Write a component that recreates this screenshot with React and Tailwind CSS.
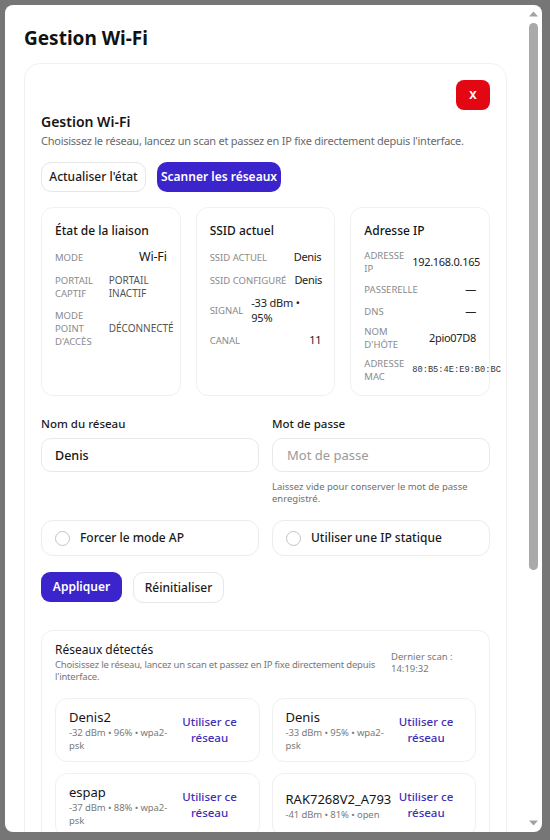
import React from "react";

const STATUS = [
  {
    title: "État de la liaison",
    gap: "gap-[9px]",
    rows: [
      { label: ["MODE"], value: "Wi-Fi", kind: "big" },
      { label: ["PORTAIL", "CAPTIF"], value: ["PORTAIL", "INACTIF"], kind: "state" },
      { label: ["MODE", "POINT", "D'ACCÈS"], value: ["DÉCONNECTÉ"], kind: "state" },
    ],
  },
  {
    title: "SSID actuel",
    gap: "gap-[7px]",
    rows: [
      { label: ["SSID ACTUEL"], value: "Denis" },
      { label: ["SSID CONFIGURÉ"], value: "Denis" },
      { label: ["SIGNAL"], value: ["-33 dBm •", "95%"], kind: "wrap" },
      { label: ["CANAL"], value: "11" },
    ],
  },
  {
    title: "Adresse IP",
    gap: "gap-[6px]",
    rows: [
      { label: ["ADRESSE", "IP"], value: "192.168.0.165" },
      { label: ["PASSERELLE"], value: "—" },
      { label: ["DNS"], value: "—" },
      { label: ["NOM", "D'HÔTE"], value: "2pio07D8" },
      { label: ["ADRESSE", "MAC"], value: "80:B5:4E:E9:B0:BC", kind: "mono" },
    ],
  },
];

const NETWORKS = [
  { ssid: "Denis2", meta: ["-32 dBm • 96% • wpa2-", "psk"] },
  { ssid: "Denis", meta: ["-33 dBm • 95% • wpa2-", "psk"] },
  { ssid: "espap", meta: ["-37 dBm • 88% • wpa2-", "psk"] },
  { ssid: "RAK7268V2_A793", meta: ["-41 dBm • 81% • open"] },
];

function Lines({ lines }) {
  return lines.map((l, i) => (
    <React.Fragment key={i}>
      {i > 0 && <br />}
      {l}
    </React.Fragment>
  ));
}

function StatusValue({ row }) {
  if (row.kind === "big")
    return <div className="whitespace-nowrap text-[12.5px] leading-4 tracking-[-0.2px] text-[#151515]">{row.value}</div>;
  if (row.kind === "state")
    return (
      <div className="w-[58px] shrink-0 text-left text-[10px] leading-[13px] text-[#555]">
        <Lines lines={row.value} />
      </div>
    );
  if (row.kind === "wrap")
    return (
      <div className="w-[73px] shrink-0 text-left text-[11px] leading-[15px] tracking-[-0.2px] text-[#222]">
        <Lines lines={row.value} />
      </div>
    );
  if (row.kind === "mono")
    return (
      <div className="-mr-[22px] whitespace-nowrap font-['Liberation_Mono',monospace] text-[8.7px] leading-4 text-[#333]">
        {row.value}
      </div>
    );
  return <div className="whitespace-nowrap text-[11px] leading-4 tracking-[-0.3px] text-[#222]">{row.value}</div>;
}

function StatusCard({ card }) {
  return (
    <div className="rounded-xl border border-[#f0f0f0] px-[13px] pt-[15px] pb-[12px]">
      <div className="text-[12px] leading-4 font-medium text-[#161616]">{card.title}</div>
      <div className={`mt-[10px] flex flex-col ${card.gap}`}>
        {card.rows.map((row, i) => (
          <div key={i} className="flex items-center justify-between gap-2">
            <div className="whitespace-nowrap text-[9.5px] leading-[13px] text-[#8a8a8a]">
              <Lines lines={row.label} />
            </div>
            <StatusValue row={row} />
          </div>
        ))}
      </div>
    </div>
  );
}

function Toggle({ label }) {
  return (
    <label className="flex h-[36px] items-center gap-[10px] rounded-xl border border-[#ececec] pl-[13px]">
      <span className="h-[15px] w-[15px] rounded-full border border-[#c4c4c4] bg-white" />
      <span className="text-[12px] font-medium text-[#1b1b1b]">{label}</span>
    </label>
  );
}

function NetworkItem({ net }) {
  return (
    <div className="flex h-[64px] items-center gap-2 rounded-xl border border-[#f0f0f0] pl-[13px] pr-[15px]">
      <div className="min-w-0 flex-1">
        <div className="whitespace-nowrap text-[13px] leading-[18px] text-[#151515]">{net.ssid}</div>
        <div className="whitespace-nowrap text-[9.5px] leading-[13px] tracking-[-0.1px] text-[#7a7a7a]">
          <Lines lines={net.meta} />
        </div>
      </div>
      <button className="w-[68px] shrink-0 text-center text-[11.5px] leading-4 font-medium text-[#3f2fb8]">
        Utiliser ce
        <br />
        réseau
      </button>
    </div>
  );
}

export default function App() {
  return (
    <div className="h-[840px] w-[550px] overflow-hidden bg-[#767676] p-[5px] font-['Noto_Sans',sans-serif]">
      <div className="relative h-[827px] w-[537px] overflow-hidden rounded-lg bg-white">
        <div className="pl-[19px] pr-[35px] pt-[19px]">
          <h1 className="text-[19px] leading-7 font-bold text-[#111]">Gestion Wi-Fi</h1>

          <section className="mt-[11px] rounded-2xl border border-[#f0f0f0] px-[16px] pt-[16px] pb-6">
            <div className="flex justify-end">
              <button className="flex h-[30px] w-[34px] items-center justify-center rounded-lg bg-[#e30613] text-[11px] font-bold text-white">
                X
              </button>
            </div>

            <h2 className="mt-[2px] text-[14px] leading-5 font-semibold text-[#151515]">Gestion Wi-Fi</h2>
            <p className="mt-px whitespace-nowrap text-[11px] leading-4 tracking-[-0.25px] text-[#6a6a6a]">
              Choisissez le réseau, lancez un scan et passez en IP fixe directement depuis l'interface.
            </p>

            <div className="mt-[13px] flex gap-[11px]">
              <button className="h-[30px] w-[105px] rounded-[10px] border border-[#e6e6e6] bg-white text-[12px] font-medium text-[#1b1b1b]">
                Actualiser l'état
              </button>
              <button className="h-[30px] w-[124px] rounded-[10px] bg-[#3b24cc] text-[12px] font-semibold text-white">
                Scanner les réseaux
              </button>
            </div>

            <div className="mt-[15px] grid grid-cols-3 gap-[15px]">
              {STATUS.map((c) => (
                <StatusCard key={c.title} card={c} />
              ))}
            </div>

            <div className="mt-[20px] grid grid-cols-2 gap-x-[13px]">
              <div>
                <div className="text-[11.5px] leading-4 font-medium text-[#1b1b1b]">Nom du réseau</div>
                <input
                  readOnly
                  value="Denis"
                  className="mt-[6px] h-[34px] w-full rounded-[10px] border border-[#e8e8e8] px-[13px] text-[12.5px] font-medium text-[#151515] outline-none"
                />
              </div>
              <div>
                <div className="text-[11.5px] leading-4 font-medium text-[#1b1b1b]">Mot de passe</div>
                <input
                  readOnly
                  type="password"
                  placeholder="Mot de passe"
                  className="mt-[6px] h-[34px] w-full rounded-[10px] border border-[#e8e8e8] px-[14px] text-[13px] text-[#151515] outline-none placeholder:text-[#9a9a9a]"
                />
                <p className="mt-[9px] text-[9.5px] leading-3 text-[#6f6f6f]">
                  Laissez vide pour conserver le mot de passe
                  <br />
                  enregistré.
                </p>
              </div>
            </div>

            <div className="mt-[15px] grid grid-cols-2 gap-x-[13px]">
              <Toggle label="Forcer le mode AP" />
              <Toggle label="Utiliser une IP statique" />
            </div>

            <div className="mt-[16px] flex gap-[11px]">
              <button className="h-[30px] w-[81px] rounded-[9px] bg-[#3b24cc] text-[12px] font-semibold text-white">
                Appliquer
              </button>
              <button className="h-[31px] w-[91px] rounded-[10px] border border-[#e6e6e6] bg-white text-[12px] font-medium text-[#1b1b1b]">
                Réinitialiser
              </button>
            </div>

            <div className="mt-[27px] rounded-xl border border-[#f0f0f0] px-[13px] pt-[11px] pb-4">
              <div className="flex items-center gap-2">
                <div className="min-w-0 flex-1">
                  <div className="text-[12px] leading-4 text-[#151515]">Réseaux détectés</div>
                  <p className="mt-px whitespace-nowrap text-[9.5px] leading-3 tracking-[-0.2px] text-[#777]">
                    Choisissez le réseau, lancez un scan et passez en IP fixe directement depuis
                    <br />
                    l'interface.
                  </p>
                </div>
                <div className="w-[85px] shrink-0 text-[9.5px] leading-3 text-[#777]">
                  Dernier scan :
                  <br />
                  14:19:32
                </div>
              </div>

              <div className="mt-[15px] grid grid-cols-2 gap-x-[12px] gap-y-[11px]">
                {NETWORKS.map((n) => (
                  <NetworkItem key={n.ssid} net={n} />
                ))}
              </div>
            </div>
          </section>
        </div>

        {/* scrollbar */}
        <div className="pointer-events-none absolute top-0 right-0 bottom-0 w-[17px]">
          <svg className="absolute top-[6px] left-[4px]" width="9" height="6" viewBox="0 0 9 6">
            <path d="M0 5.5 L4.5 0.5 L9 5.5 Z" fill="#a3a3a3" />
          </svg>
          <div className="absolute top-[18px] left-[4px] h-[547px] w-[9px] rounded-full bg-[#a9a9a9]" />
          <svg className="absolute bottom-[6px] left-[4px]" width="9" height="6" viewBox="0 0 9 6">
            <path d="M0 0.5 L4.5 5.5 L9 0.5 Z" fill="#a3a3a3" />
          </svg>
        </div>
      </div>
    </div>
  );
}
